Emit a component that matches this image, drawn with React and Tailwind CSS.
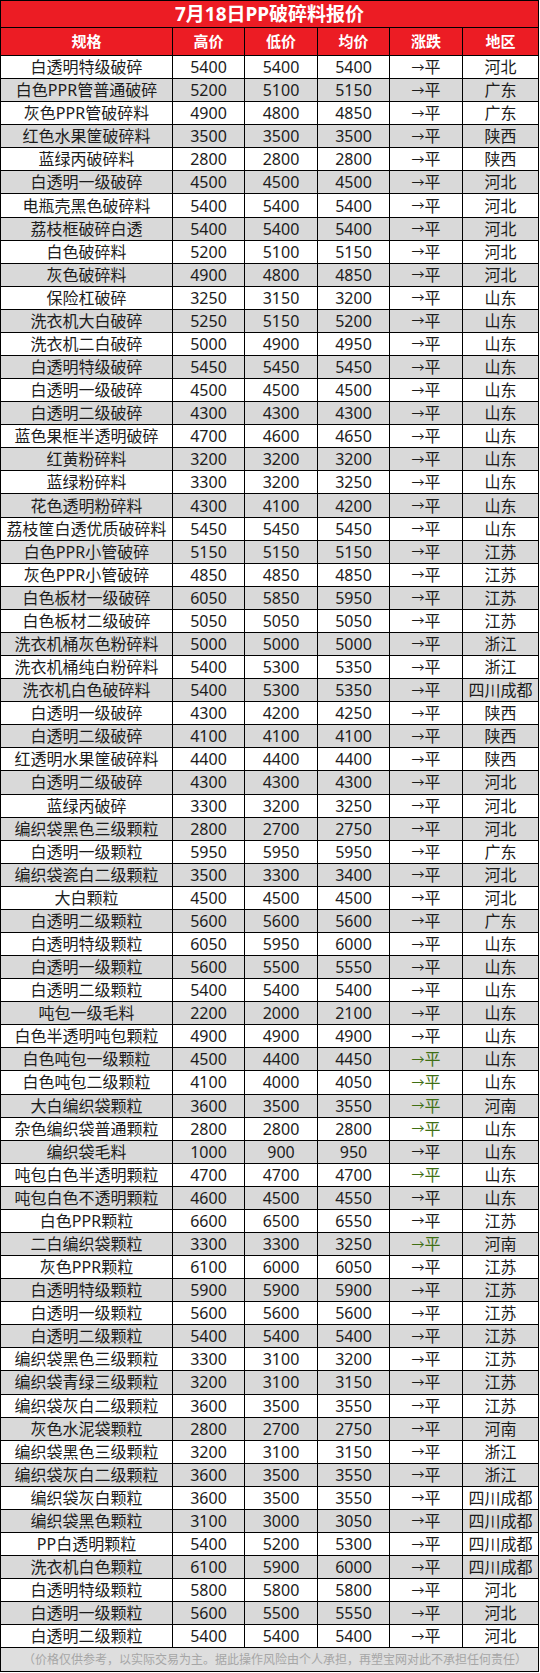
const rows = [
  ['白透明特级破碎', '5400', '5400', '5400', '河北'],
  ['白色PPR管普通破碎', '5200', '5100', '5150', '广东'],
  ['灰色PPR管破碎料', '4900', '4800', '4850', '广东'],
  ['红色水果筐破碎料', '3500', '3500', '3500', '陕西'],
  ['蓝绿丙破碎料', '2800', '2800', '2800', '陕西'],
  ['白透明一级破碎', '4500', '4500', '4500', '河北'],
  ['电瓶壳黑色破碎料', '5400', '5400', '5400', '河北'],
  ['荔枝框破碎白透', '5400', '5400', '5400', '河北'],
  ['白色破碎料', '5200', '5100', '5150', '河北'],
  ['灰色破碎料', '4900', '4800', '4850', '河北'],
  ['保险杠破碎', '3250', '3150', '3200', '山东'],
  ['洗衣机大白破碎', '5250', '5150', '5200', '山东'],
  ['洗衣机二白破碎', '5000', '4900', '4950', '山东'],
  ['白透明特级破碎', '5450', '5450', '5450', '山东'],
  ['白透明一级破碎', '4500', '4500', '4500', '山东'],
  ['白透明二级破碎', '4300', '4300', '4300', '山东'],
  ['蓝色果框半透明破碎', '4700', '4600', '4650', '山东'],
  ['红黄粉碎料', '3200', '3200', '3200', '山东'],
  ['蓝绿粉碎料', '3300', '3200', '3250', '山东'],
  ['花色透明粉碎料', '4300', '4100', '4200', '山东'],
  ['荔枝筐白透优质破碎料', '5450', '5450', '5450', '山东'],
  ['白色PPR小管破碎', '5150', '5150', '5150', '江苏'],
  ['灰色PPR小管破碎', '4850', '4850', '4850', '江苏'],
  ['白色板材一级破碎', '6050', '5850', '5950', '江苏'],
  ['白色板材二级破碎', '5050', '5050', '5050', '江苏'],
  ['洗衣机桶灰色粉碎料', '5000', '5000', '5000', '浙江'],
  ['洗衣机桶纯白粉碎料', '5400', '5300', '5350', '浙江'],
  ['洗衣机白色破碎料', '5400', '5300', '5350', '四川成都'],
  ['白透明一级破碎', '4300', '4200', '4250', '陕西'],
  ['白透明二级破碎', '4100', '4100', '4100', '陕西'],
  ['红透明水果筐破碎料', '4400', '4400', '4400', '陕西'],
  ['白透明二级破碎', '4300', '4300', '4300', '河北'],
  ['蓝绿丙破碎', '3300', '3200', '3250', '河北'],
  ['编织袋黑色三级颗粒', '2800', '2700', '2750', '河北'],
  ['白透明一级颗粒', '5950', '5950', '5950', '广东'],
  ['编织袋瓷白二级颗粒', '3500', '3300', '3400', '河北'],
  ['大白颗粒', '4500', '4500', '4500', '河北'],
  ['白透明二级颗粒', '5600', '5600', '5600', '广东'],
  ['白透明特级颗粒', '6050', '5950', '6000', '山东'],
  ['白透明一级颗粒', '5600', '5500', '5550', '山东'],
  ['白透明二级颗粒', '5400', '5400', '5400', '山东'],
  ['吨包一级毛料', '2200', '2000', '2100', '山东'],
  ['白色半透明吨包颗粒', '4900', '4900', '4900', '山东'],
  ['白色吨包一级颗粒', '4500', '4400', '4450', '山东', true],
  ['白色吨包二级颗粒', '4100', '4000', '4050', '山东', true],
  ['大白编织袋颗粒', '3600', '3500', '3550', '河南', true],
  ['杂色编织袋普通颗粒', '2800', '2800', '2800', '山东', true],
  ['编织袋毛料', '1000', '900', '950', '山东'],
  ['吨包白色半透明颗粒', '4700', '4700', '4700', '山东', true],
  ['吨包白色不透明颗粒', '4600', '4500', '4550', '山东'],
  ['白色PPR颗粒', '6600', '6500', '6550', '江苏'],
  ['二白编织袋颗粒', '3300', '3300', '3250', '河南', true],
  ['灰色PPR颗粒', '6100', '6000', '6050', '江苏'],
  ['白透明特级颗粒', '5900', '5900', '5900', '江苏'],
  ['白透明一级颗粒', '5600', '5600', '5600', '江苏'],
  ['白透明二级颗粒', '5400', '5400', '5400', '江苏'],
  ['编织袋黑色三级颗粒', '3300', '3100', '3200', '江苏'],
  ['编织袋青绿三级颗粒', '3200', '3100', '3150', '江苏'],
  ['编织袋灰白二级颗粒', '3600', '3500', '3550', '江苏'],
  ['灰色水泥袋颗粒', '2800', '2700', '2750', '河南'],
  ['编织袋黑色三级颗粒', '3200', '3100', '3150', '浙江'],
  ['编织袋灰白二级颗粒', '3600', '3500', '3550', '浙江'],
  ['编织袋灰白颗粒', '3600', '3500', '3550', '四川成都'],
  ['编织袋黑色颗粒', '3100', '3000', '3050', '四川成都'],
  ['PP白透明颗粒', '5400', '5200', '5300', '四川成都'],
  ['洗衣机白色颗粒', '6100', '5900', '6000', '四川成都'],
  ['白透明特级颗粒', '5800', '5800', '5800', '河北'],
  ['白透明一级颗粒', '5600', '5500', '5550', '河北'],
  ['白透明二级颗粒', '5400', '5400', '5400', '河北']
]

const headers = ['规格', '高价', '低价', '均价', '涨跌', '地区']
const cols = 'grid grid-cols-[172px_72px_73px_72px_73px_1fr]'

export default function App() {
  return (
    <div
      className="w-[540px] h-[1673px] bg-white"
      style={{ fontFamily: '"Noto Sans", "Noto Sans CJK SC", sans-serif' }}
    >
      <div className="w-[539px] border-l border-r border-b border-black">
        {/* Title */}
        <div className="h-[28px] flex items-center justify-center bg-[#ec1c24] border-t border-b border-black text-white text-[19px] font-bold">
          7月18日PP破碎料报价
        </div>

        {/* Header */}
        <div className={`${cols} h-[28px] bg-[#ec1c24] border-b border-black text-white text-[15px] font-bold`}>
          {headers.map((h, i) => (
            <div
              key={h}
              className={`flex items-center justify-center ${i < 5 ? 'border-r border-black' : ''}`}
            >
              {h}
            </div>
          ))}
        </div>

        {/* Data rows */}
        {rows.map((r, idx) => (
          <div
            key={idx}
            className={`${cols} h-[23.08px] border-b border-black text-[16px] text-[#1c1c1c] leading-none ${
              idx % 2 === 1 ? 'bg-[#d9d9d9]' : 'bg-white'
            }`}
          >
            <div className="flex items-center justify-center border-r border-black whitespace-nowrap">{r[0]}</div>
            <div className="flex items-center justify-center border-r border-black">{r[1]}</div>
            <div className="flex items-center justify-center border-r border-black">{r[2]}</div>
            <div className="flex items-center justify-center border-r border-black">{r[3]}</div>
            <div
              className={`flex items-center justify-center border-r border-black ${
                r[5] ? 'text-[#3f6f14]' : ''
              }`}
            >
              <span className="text-[13px]">→</span>平
            </div>
            <div className="flex items-center justify-center whitespace-nowrap">{r[4]}</div>
          </div>
        ))}

        {/* Footer note */}
        <div className="h-[23px] flex items-center pl-[22px] bg-[#dedede] text-[12px] text-[#a6a6a6] whitespace-nowrap">
          （价格仅供参考，以实际交易为主。据此操作风险由个人承担，再塑宝网对此不承担任何责任）
        </div>
      </div>
    </div>
  )
}
